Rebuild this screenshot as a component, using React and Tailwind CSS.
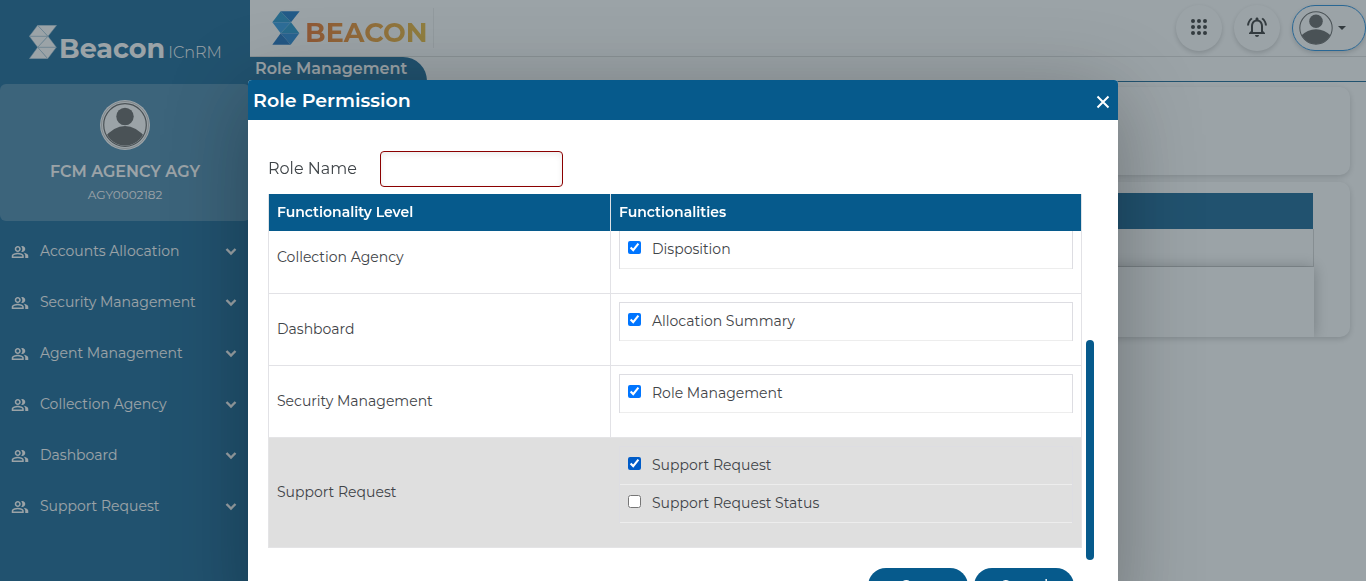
import React, { useLayoutEffect, useRef } from "react";
import { MdOutlineNotificationsActive, MdOutlinePeopleAlt } from "react-icons/md";

const MENU = [
  "Accounts Allocation",
  "Security Management",
  "Agent Management",
  "Collection Agency",
  "Dashboard",
  "Support Request",
];

const LEVELS = [
  { name: "Collection Agency", items: [["Disposition", true]] },
  { name: "Dashboard", items: [["Allocation Summary", true]] },
  { name: "Security Management", items: [["Role Management", true]] },
  {
    name: "Support Request",
    active: true,
    items: [
      ["Support Request", true],
      ["Support Request Status", false],
    ],
  },
];

function Avatar({ className, rings }) {
  return (
    <svg viewBox="0 0 50 50" className={className} aria-hidden="true">
      <defs>
        <clipPath id={rings ? "face-large" : "face-small"}>
          <circle cx="25" cy="25" r={rings ? 20.5 : 23.5} />
        </clipPath>
      </defs>
      <circle cx="25" cy="25" r={rings ? 25 : 24} fill="#fff" />
      {rings && <circle cx="25" cy="25" r="23.5" fill="none" stroke="#bbb" strokeWidth="0.8" />}
      <circle cx="25" cy="25" r={rings ? 21.3 : 23.8} fill="none" stroke="#5c5c5c" strokeWidth={rings ? 1.2 : 1.5} />
      <g fill="#5c5c5c" clipPath={rings ? "url(#face-large)" : "url(#face-small)"}>
        <circle cx="25" cy={rings ? 16.5 : 15} r={rings ? 8.7 : 10} />
        <path d={rings ? "M4 38Q14 26 25 26T46 38V50H4Z" : "M0 39Q12 27 25 27T50 39V50H0Z"} />
      </g>
    </svg>
  );
}

function Mark({ colored }) {
  const c = colored
    ? ["#1a8fc8", "#0f6fc0", "#2695e0", "#1a8fc8", "#1c7fd0", "#0f66b8"]
    : ["#fff", "#fff", "#fff", "#fff", "#fff", "#fff"];
  return (
    <svg
      viewBox="0 0 84 102"
      className="h-[34px] w-7 shrink-0"
      aria-hidden="true"
      stroke={colored ? "none" : "#8fb5cd"}
      strokeWidth="1.5"
      strokeLinejoin="round"
    >
      <path d="M26 1 1 34H57Z" fill={c[0]} />
      <path d="M26 1H83L57 34Z" fill={c[1]} />
      <path d="M1 34H57L26 67Z" fill={c[2]} />
      <path d="M57 34 82 67H26Z" fill={c[3]} />
      <path d="M26 67H82L56 101Z" fill={c[4]} />
      <path d="M26 67 56 101H1Z" fill={c[5]} />
    </svg>
  );
}

function AppsGrid() {
  return (
    <svg viewBox="0 0 24 24" className="size-6" fill="currentColor" aria-hidden="true">
      {[6, 12, 18].map((cy) => [6, 12, 18].map((cx) => <circle key={`${cx}-${cy}`} cx={cx} cy={cy} r="2" />))}
    </svg>
  );
}

function Sidebar() {
  return (
    <aside className="w-[250px] shrink-0 bg-[#0b5d8f] text-white">
      <div className="flex h-[84px] items-end gap-0.5 pb-[25px] pl-[29px]">
        <Mark />
        <div className="flex items-baseline gap-[3px]">
          <span className="text-[27px] leading-4 font-bold">Beacon</span>
          <span className="text-base leading-3 font-light">ICnRM</span>
        </div>
      </div>
      <div className="flex h-[137px] flex-col items-center rounded-md bg-white/22 pt-4">
        <Avatar rings className="size-[50px]" />
        <h2 className="mt-2.5 text-base leading-6 font-semibold">FCM AGENCY AGY</h2>
        <p className="text-xs leading-[22px]">AGY0002182</p>
      </div>
      <nav className="pt-[5px]">
        {MENU.map((label) => (
          <a key={label} href="#" className="flex h-[51px] items-center pr-[13px] pl-[11px] text-sm">
            <MdOutlinePeopleAlt className="mr-[11px] size-[18px]" />
            <span className="flex-1 pb-0.5">{label}</span>
            <svg viewBox="0 0 12 12" className="size-3" fill="none" stroke="currentColor" strokeWidth="2.4" aria-hidden="true">
              <path d="M1.5 3 6 7.5 10.5 3" />
            </svg>
          </a>
        ))}
      </nav>
    </aside>
  );
}

function Page() {
  return (
    <div className="flex min-w-0 flex-1 flex-col bg-white">
      <header className="flex h-[57px] items-center border-b border-[#dcdcdc]">
        <div className="ml-[22px] flex h-10 items-center gap-[5px] border-r border-[#ececec] pr-[5px]">
          <Mark colored />
          <span className="bg-linear-to-r from-[#e8691c] to-[#e8b730] bg-clip-text pt-2.5 text-[27px] leading-7 font-bold text-transparent">
            BEACON
          </span>
        </div>
        <div className="ml-auto flex gap-3 text-[#2f2f2f]">
          <button aria-label="Applications" className="flex size-[46px] items-center justify-center rounded-full pb-0.5 shadow-[0_2px_5px_rgba(0,0,0,0.2)]">
            <AppsGrid />
          </button>
          <button aria-label="Notifications" className="flex size-[46px] items-center justify-center rounded-full pb-0.5 shadow-[0_2px_5px_rgba(0,0,0,0.2)]">
            <MdOutlineNotificationsActive className="size-6" />
          </button>
          <button aria-label="Account" className="flex h-[46px] w-[74px] items-center gap-[5px] rounded-full border border-[#1b86d8] pl-1.5 shadow-[0_2px_5px_rgba(0,0,0,0.2)]">
            <Avatar className="size-[34px]" />
            <svg viewBox="0 0 8 4" className="h-1 w-2" fill="currentColor" aria-hidden="true">
              <path d="M0 0H8L4 4Z" />
            </svg>
          </button>
        </div>
      </header>
      <div className="flex h-[25px] border-b border-[#0b5d8f]">
        <h1 className="w-[177px] rounded-tr-3xl bg-[#0b5d8f] pl-[5px] text-base leading-6 font-semibold text-white">
          Role Management
        </h1>
      </div>
      <main className="flex flex-col gap-[7px] pt-[5px] pr-4 pl-4">
        <section className="h-[88px] rounded-[10px] bg-white shadow-[0_2px_6px_rgba(0,0,0,0.2)]" />
        <section className="h-[155px] overflow-hidden rounded-[10px] bg-white pt-[11px] pr-9 pl-9 shadow-[0_2px_6px_rgba(0,0,0,0.2)]">
          <div className="mr-px h-9 bg-[#0b5d8f]" />
          <div className="h-[38px] border-r border-b border-[#d4d4d4]" />
          <div className="h-[70px] bg-white shadow-[0_0_14px_rgba(0,0,0,0.3)]" />
        </section>
      </main>
    </div>
  );
}

function PermissionTable() {
  const scroller = useRef(null);
  useLayoutEffect(() => {
    scroller.current.scrollTop = scroller.current.scrollHeight;
  }, []);

  return (
    <div className="mt-[7px] flex h-[366px] gap-1 pr-1">
      <div ref={scroller} className="min-w-0 flex-1 overflow-y-auto pb-3 [scrollbar-width:none]">
        <table className="w-full table-fixed border-separate border-spacing-0 text-left text-sm text-[#3f4448]">
          <thead className="sticky top-0 z-10 text-white">
            <tr className="h-[37px]">
              <th className="w-[343px] border-r border-l border-[#dee2e6] bg-[#065a8c] bg-clip-padding px-2 pb-0.5 font-semibold">
                Functionality Level
              </th>
              <th className="border-r border-[#dee2e6] bg-[#065a8c] bg-clip-padding px-2 pb-0.5 font-semibold">Functionalities</th>
            </tr>
          </thead>
          <tbody>
            {LEVELS.map(({ name, items, active }) => (
              <tr key={name} className={active ? "bg-[#dfdfdf]" : "bg-white"}>
                <td className={active ? "border-t border-b border-l border-[#e4e4e6] px-2 pb-0.5" : "border-t border-r border-l border-[#e2e2e6] px-2 pb-0.5"}>
                  {name}
                </td>
                <td className={active ? "border-t border-r border-b border-[#e4e4e6] px-2 pt-2 pb-6" : "border-t border-r border-[#e2e2e6] px-2 pt-2 pb-6"}>
                  <ul className="border-t border-r border-l border-[#dddde2]">
                    {items.map(([label, checked]) => (
                      <li key={label} className="h-[38px] border-b border-[#ededed] px-2">
                        <label className="flex h-9 items-center gap-[11px]">
                          <input
                            type="checkbox"
                            defaultChecked={checked}
                            className={active ? "mb-1 size-[13px] accent-[#005cc8]" : "mb-1 size-[13px] accent-[#0075ff]"}
                          />
                          {label}
                        </label>
                      </li>
                    ))}
                  </ul>
                </td>
              </tr>
            ))}
          </tbody>
        </table>
      </div>
      <div className="flex w-2 items-end">
        <div className="h-[220px] w-2 rounded-full bg-[#065a8c]" />
      </div>
    </div>
  );
}

function RoleDialog() {
  return (
    <div
      role="dialog"
      aria-labelledby="dialog-title"
      className="w-full max-w-[870px] self-start rounded-t bg-white shadow-[0_15px_84px_rgba(0,0,0,0.3)]"
    >
      <div className="flex h-10 items-center justify-between rounded-t bg-[#065a8c] pr-2 pl-[5px] text-white">
        <h2 id="dialog-title" className="pt-0.5 text-[19px] font-semibold">
          Role Permission
        </h2>
        <button aria-label="Close" className="pt-1">
          <svg viewBox="0 0 14 14" className="size-3.5" fill="none" stroke="currentColor" strokeWidth="2" aria-hidden="true">
            <path d="M1.5 1.5 12.5 12.5M12.5 1.5 1.5 12.5" />
          </svg>
        </button>
      </div>
      <div className="px-5 pt-[31px] pb-5">
        <div className="flex items-center">
          <label htmlFor="role-name" className="w-28 text-base text-[#3f4448]">
            Role Name
          </label>
          <input
            id="role-name"
            type="text"
            className="h-9 w-[183px] rounded border border-[#8b0000] px-3 shadow-[inset_0_2px_6px_rgba(0,0,0,0.08)]"
          />
        </div>
        <PermissionTable />
        <div className="mt-2 flex justify-end gap-1.5 pr-6 text-sm font-medium text-white">
          <button className="h-9 w-[100px] rounded-full bg-[#065a8c] pb-0.5">Save</button>
          <button className="h-9 w-[100px] rounded-full bg-[#065a8c] pb-0.5">Cancel</button>
        </div>
      </div>
    </div>
  );
}

export default function App() {
  return (
    <div className="h-screen overflow-hidden font-['Montserrat','Inter',sans-serif]">
      <div className="flex min-h-screen">
        <Sidebar />
        <Page />
      </div>
      <div className="fixed inset-0 z-20 flex justify-center overflow-hidden bg-[#37474f]/50 pt-20">
        <RoleDialog />
      </div>
    </div>
  );
}
